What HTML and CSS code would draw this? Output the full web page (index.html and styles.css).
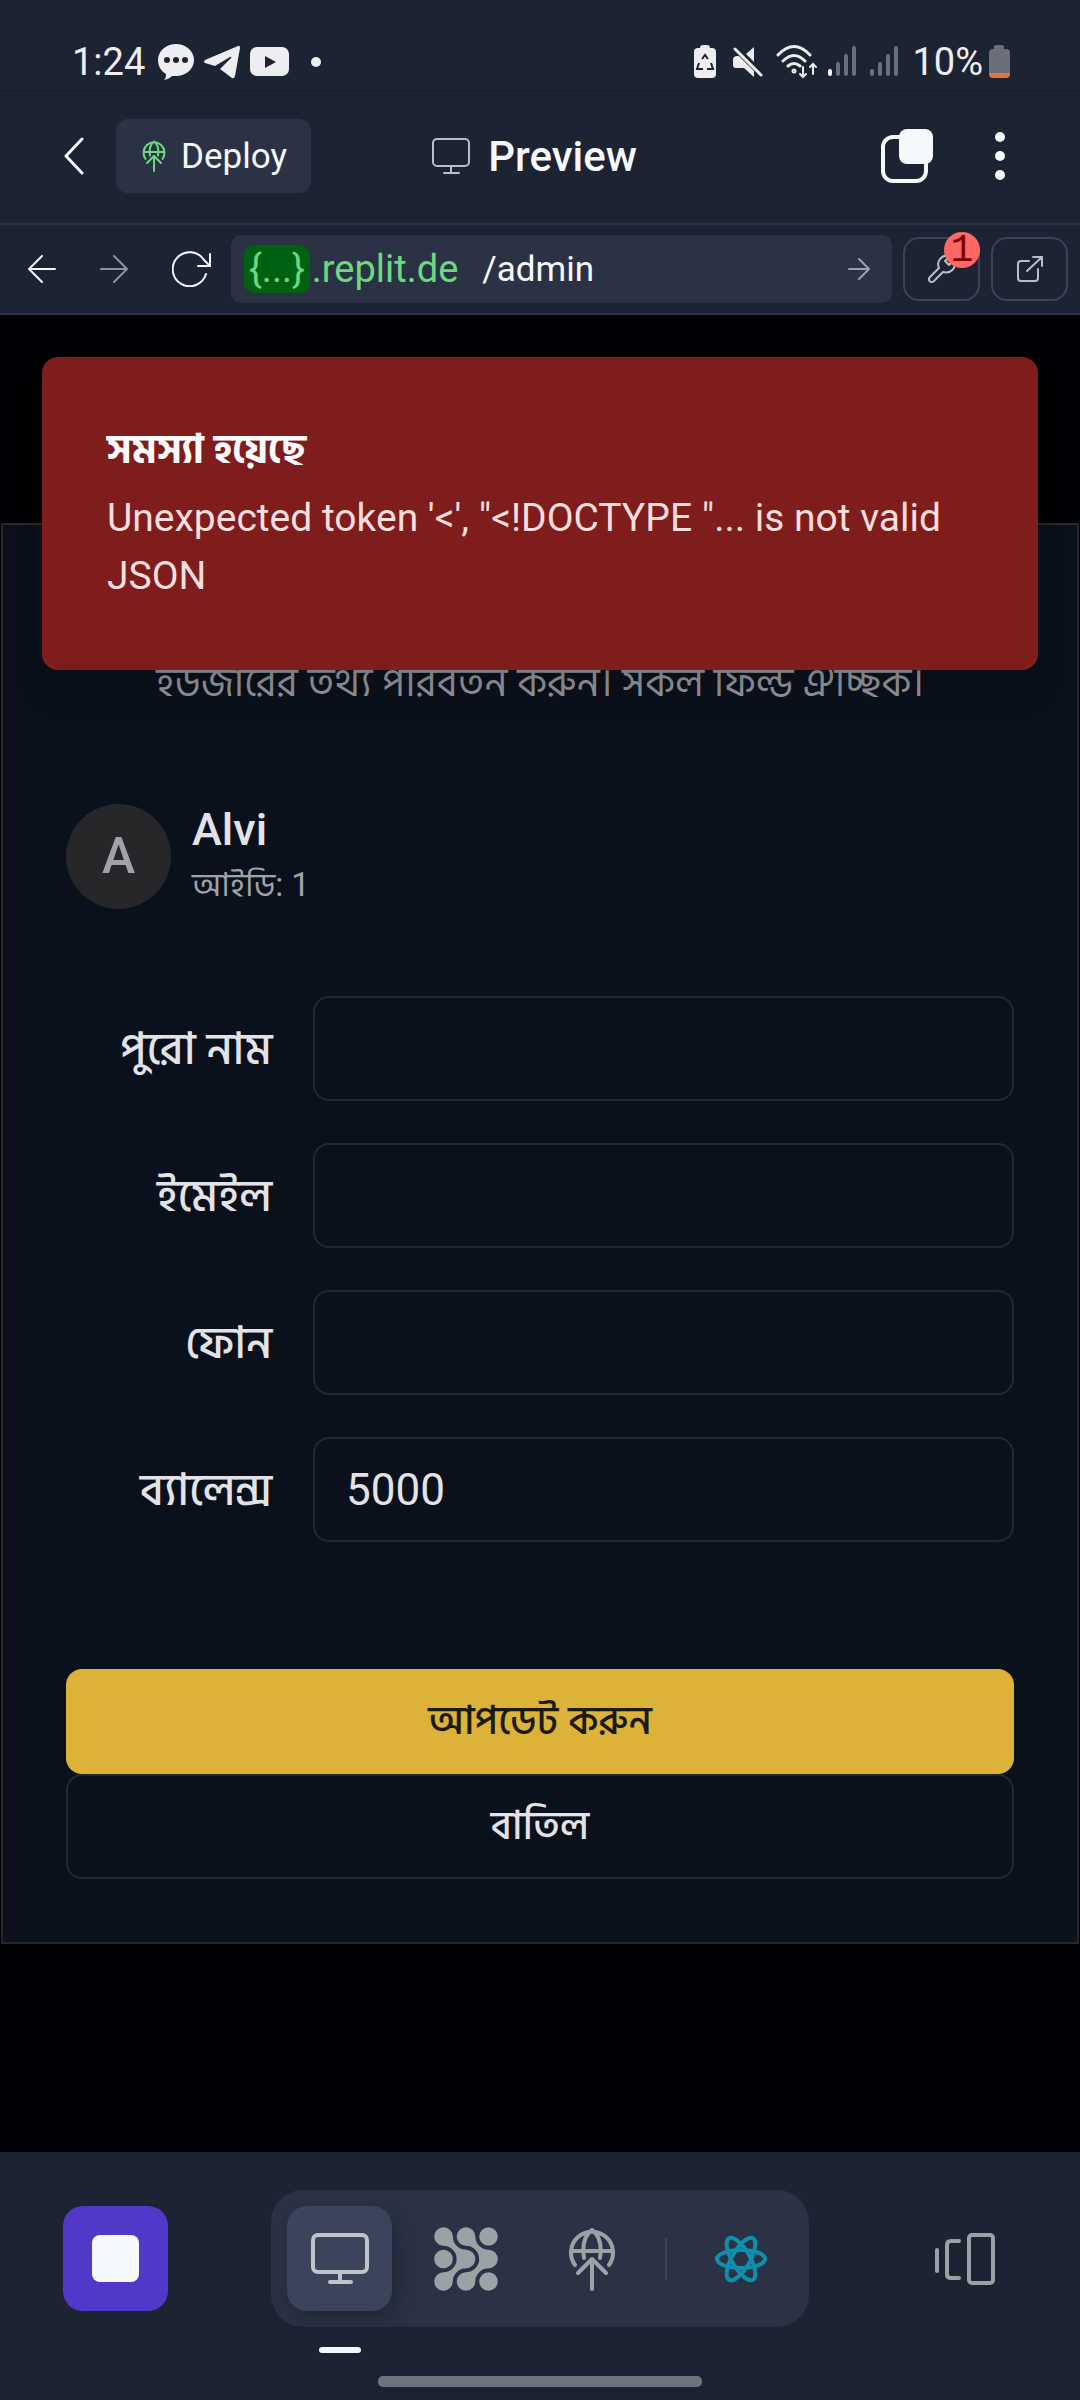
FILE: index.html
```html
<!DOCTYPE html>
<html lang="bn">
<head>
<meta charset="utf-8">
<meta name="viewport" content="width=device-width, initial-scale=1">
<title>Preview</title>
<link rel="stylesheet" href="styles.css">
</head>
<body>
<div class="screen">
  <div class="status">
    <div class="status-side">
      <span class="clock">1:24</span>
      <svg class="status-chat" width="36" height="36" viewBox="0 0 36 36" aria-hidden="true"><path fill="#eeeef1" d="M18 0C28 0 36 7 36 16S28 32 18 32h-4c-2 2-4 3-8 4 2-2 2-4 2-6C3 27 0 22 0 16 0 7 8 0 18 0z"/><g fill="#1c2333"><circle cx="9" cy="16" r="3"/><circle cx="18" cy="16" r="3"/><circle cx="27" cy="16" r="3"/></g></svg>
      <svg class="status-app" width="36" height="34" viewBox="0 0 36 34" aria-hidden="true"><path fill="#eeeef1" d="M1 15 34 1q2-1 2 2l-5 28q-1 3-3 2l-12-9 11-11q1-2-1-1L11 21 1 18q-2-1 0-3z"/></svg>
      <svg class="status-app" width="39" height="29" viewBox="0 0 39 29" aria-hidden="true"><rect width="39" height="29" rx="7" fill="#eeeef1"/><path d="m15 9 11 6-11 6z" fill="#1c2333"/></svg>
      <span class="status-dot"></span>
    </div>
    <div class="status-side">
      <svg width="22" height="34" viewBox="0 0 22 34" aria-hidden="true"><path fill="#eeeef1" d="M6 3q0-3 3-3h4q3 0 3 3h2q4 0 4 4v22q0 4-4 4H4q-4 0-4-4V7q0-4 4-4z"/><path d="M8 14l3-4 3 4M5 18l-2 6h6M17 18l2 6h-6" fill="none" stroke="#1c2333" stroke-width="2"/></svg>
      <svg class="status-mute" width="30" height="32" viewBox="0 0 30 32" aria-hidden="true"><path fill="#eeeef1" d="M13 8 21 1v15zM0 13q0-2 3-3h3l15 15v6l-10-9H3q-3 0-3-3z"/><path d="m2 3 26 26" stroke="#eeeef1" stroke-width="3" stroke-linecap="round"/></svg>
      <svg class="status-wifi" width="42" height="34" viewBox="0 0 42 34" fill="none" stroke="#eeeef1" stroke-width="3" stroke-linecap="round" aria-hidden="true"><path d="M2 10q16-17 32 0M7 16q11-11 22 0M12 21q6-5 12 0"/><circle cx="18" cy="26" r="1"/><path d="M27 22v10m-3-3 3 3 3-3M37 29V19m-3 3 3-3 3 3" stroke-width="2"/></svg>
      <svg class="status-signal" width="28" height="31" viewBox="0 0 28 31" stroke="#6b6f7b" stroke-width="4" stroke-linecap="round" aria-hidden="true"><path d="M2 25v3" stroke="#ffffff"/><path d="M10 18v10M18 10v18M26 2v26"/></svg>
      <svg class="status-signal" width="28" height="31" viewBox="0 0 28 31" stroke="#6b6f7b" stroke-width="4" stroke-linecap="round" aria-hidden="true"><path d="M2 25v3M10 18v10M18 10v18M26 2v26"/></svg>
      <span class="charge">10%</span>
      <svg width="21" height="34" viewBox="0 0 21 34" aria-hidden="true"><path fill="#6b6f7b" d="M5 4V2q0-2 2-2h6q2 0 2 2v2h2q4 0 4 4v20H0V8q0-4 4-4z"/><path fill="#ea6f41" d="M0 28h21v1q0 4-4 4H4q-4 0-4-4z"/></svg>
    </div>
  </div>

  <header class="appbar">
    <div class="appbar-left">
      <button class="icon-btn back" aria-label="Back"><svg width="20" height="38" viewBox="0 0 20 38"><path d="M18 2 2 19l16 17" fill="none" stroke="#f5f9fc" stroke-width="3" stroke-linecap="round" stroke-linejoin="round"/></svg></button>
      <button class="deploy"><svg width="24" height="32" viewBox="0 0 48 64" fill="none" stroke="#6cd97e" stroke-width="4" stroke-linecap="round" stroke-linejoin="round" aria-hidden="true"><path d="M7 38a21 21 0 1 1 34 0M3 24h42M16 31C14 18 17 8 24 3c7 5 10 15 8 28M24 62V32M10 46l14-14 14 14"/></svg>Deploy</button>
    </div>
    <h1 class="title"><svg width="38" height="37" viewBox="0 0 38 37" fill="none" stroke="#b9bfc5" stroke-width="2" stroke-linecap="round" aria-hidden="true"><rect x="1" y="1" width="36" height="27" rx="4"/><path d="M19 28v7M12 35h15"/></svg>Preview</h1>
    <div class="appbar-right">
      <button class="icon-btn" aria-label="Tabs"><svg width="52" height="54" viewBox="0 0 52 54"><rect x="2" y="8" width="43" height="44" rx="10" fill="none" stroke="#f5f9fc" stroke-width="4"/><rect x="18" y="0" width="34" height="35" rx="8" fill="#f5f9fc"/></svg></button>
      <button class="icon-btn" aria-label="More"><svg width="10" height="48" viewBox="0 0 10 48" fill="#f5f9fc"><circle cx="5" cy="5" r="5"/><circle cx="5" cy="24" r="5"/><circle cx="5" cy="43" r="5"/></svg></button>
    </div>
  </header>

  <nav class="urlbar" aria-label="Browser">
    <div class="nav-btns">
      <button class="icon-btn" aria-label="Go back"><svg width="28" height="30" viewBox="0 0 28 30" fill="none" stroke="#f5f9fc" stroke-width="2" stroke-linecap="round" stroke-linejoin="round"><path d="M27 15H1M14 2 1 15l13 13"/></svg></button>
      <button class="icon-btn" aria-label="Go forward"><svg width="28" height="30" viewBox="0 0 28 30" fill="none" stroke="#8f939b" stroke-width="2" stroke-linecap="round" stroke-linejoin="round"><path d="M1 15h26M14 2l13 13-13 13"/></svg></button>
      <button class="icon-btn" aria-label="Reload"><svg width="39" height="36" viewBox="0 0 39 36" fill="none" stroke="#f5f9fc" stroke-width="2" stroke-linecap="round" stroke-linejoin="round"><path d="M34 23A17 17 0 1 1 32 9l6 6M38 3v12H26"/></svg></button>
    </div>
    <div class="address">
      <span class="host"><span class="chip">{...}</span>.replit.de</span>
      <input class="path" type="text" value="/admin" aria-label="Path">
      <button class="icon-btn" aria-label="Go"><svg width="22" height="22" viewBox="0 0 22 22" fill="none" stroke="#9ca1a8" stroke-width="2" stroke-linecap="round" stroke-linejoin="round"><path d="M1 11h20M11 1l10 10-10 10"/></svg></button>
    </div>
    <button class="tool" aria-label="Developer tools"><svg width="28" height="30" viewBox="0 0 28 30" fill="none" stroke="#b9bfc5" stroke-width="2" stroke-linejoin="round"><path d="M22 2C14 0 8 7 11 14L2 23c-3 3 1 7 4 4l9-9c8 2 14-4 11-12l-5 5-4-4z"/></svg><span class="badge">1</span></button>
    <button class="tool" aria-label="Open in new tab"><svg width="26" height="28" viewBox="0 0 26 28" fill="none" stroke="#b9bfc5" stroke-width="2" stroke-linecap="round" stroke-linejoin="round"><path d="M12 6H4q-3 0-3 3v14q0 3 3 3h14q3 0 3-3v-9M10 16 25 2M16 2h9v9"/></svg></button>
  </nav>

  <main class="viewport">
    <div class="toast" role="alert">
      <strong class="toast-title">সমস্যা হয়েছে</strong>
      <p class="toast-text">Unexpected token '&lt;', "&lt;!DOCTYPE "... is not valid JSON</p>
    </div>
    <section class="dialog">
      <p class="desc">ইউজারের তথ্য পরিবর্তন করুন। সকল ফিল্ড ঐচ্ছিক।</p>
      <div class="user">
        <span class="avatar">A</span>
        <div>
          <h2 class="user-name">Alvi</h2>
          <p class="user-id">আইডি: 1</p>
        </div>
      </div>
      <form class="form">
        <div class="row"><label for="name">পুরো নাম</label><input id="name" type="text"></div>
        <div class="row"><label for="email">ইমেইল</label><input id="email" type="email"></div>
        <div class="row"><label for="phone">ফোন</label><input id="phone" type="tel"></div>
        <div class="row"><label for="balance">ব্যালেন্স</label><input id="balance" type="text" value="5000"></div>
        <div class="actions">
          <button class="btn btn-primary" type="submit">আপডেট করুন</button>
          <button class="btn btn-outline" type="button">বাতিল</button>
        </div>
      </form>
    </section>
  </main>

  <footer class="dock">
    <div class="dock-row">
      <button class="dock-btn stop" aria-label="Stop"><span class="stop-mark"></span></button>
      <div class="pill">
        <button class="dock-btn active" aria-label="Preview"><svg width="58" height="54" viewBox="0 0 58 54" fill="none" stroke="#bfc4ca" stroke-width="4" stroke-linecap="round"><rect x="2" y="3" width="54" height="37" rx="5"/><path d="M29 40v9M19 50h21"/></svg></button>
        <button class="dock-btn" aria-label="Agent"><svg width="64" height="64" viewBox="0 0 64 64" fill="#9ca1a6"><circle cx="9.5" cy="9.5" r="9.3"/><circle cx="32" cy="9.5" r="9.3"/><circle cx="54.500" cy="9.5" r="9.3"/><circle cx="9.5" cy="32" r="9.3"/><circle cx="32" cy="32" r="9.3"/><circle cx="54.500" cy="32" r="9.3"/><circle cx="9.5" cy="54.500" r="9.3"/><circle cx="32" cy="54.500" r="9.3"/><circle cx="54.500" cy="54.500" r="9.3"/><path d="M9.500 18.800A13.200 13.200 0 0 1 9.500 45.200V54.500H18.800A13.200 13.200 0 0 1 32 41.300V22.700A13.200 13.200 0 0 1 18.800 9.500H9.500zM32 18.800A13.200 13.200 0 0 1 32 45.200V54.500H41.300A13.200 13.200 0 0 1 54.500 41.300V22.700A13.200 13.200 0 0 1 41.300 9.500H32z"/></svg></button>
        <button class="dock-btn" aria-label="Deployments"><svg width="48" height="64" viewBox="0 0 48 64" fill="none" stroke="#9ca1a6" stroke-width="4" stroke-linecap="round" stroke-linejoin="round"><path d="M7 38a21 21 0 1 1 34 0M3 24h42M16 31C14 18 17 8 24 3c7 5 10 15 8 28M24 62V32M10 46l14-14 14 14"/></svg></button>
        <span class="divider"></span>
        <button class="dock-btn" aria-label="React"><svg width="54" height="54" viewBox="-27 -27 54 54" fill="none" stroke="#0e8fac" stroke-width="4"><ellipse rx="24" ry="9"/><ellipse rx="24" ry="9" transform="rotate(60)"/><ellipse rx="24" ry="9" transform="rotate(120)"/></svg></button>
      </div>
      <button class="dock-btn" aria-label="Panels"><svg width="60" height="54" viewBox="0 0 60 54" fill="none" stroke="#9ca1a6" stroke-width="4" stroke-linecap="round"><path d="M2 18v21M24 9h-8q-4 0-4 4v29q0 4 4 4h8"/><rect x="34" y="3" width="24" height="48" rx="3"/></svg></button>
    </div>
    <div class="gesture"></div>
  </footer>
</div>
</body>
</html>
```
FILE: styles.css
```css
* { box-sizing: border-box; }

body {
  margin: 0;
  background: #1c2333;
  color: #e3e3e6;
  font-family: Roboto, "Hind Siliguri", "Noto Sans Bengali", "Noto Sans", sans-serif;
}

h1, h2, p { margin: 0; }

button, input {
  font: inherit;
  color: inherit;
}

button {
  padding: 0;
  border: 0;
  background: none;
}

svg { display: block; flex: none; }

.screen {
  min-height: 100vh;
  display: flex;
  flex-direction: column;
}

/* Status bar */
.status {
  height: 90px;
  padding: 33px 70px 0 72px;
  display: flex;
  justify-content: space-between;
  color: #eeeef1;
  font-size: 38px;
  line-height: 60px;
}
.status-side { display: flex; align-items: center; }
.clock { margin-right: 13px; }
.status-app { margin-left: 10px; }
.status-dot {
  width: 10px;
  height: 10px;
  margin-left: 22px;
  border-radius: 50%;
  background: #eeeef1;
}
.status-mute { margin-left: 17px; }
.status-wifi { margin: 0 10px 0 13px; }
.status-signal { margin-right: 14px; }
.charge { margin-right: 6px; }

/* App bar */
.appbar {
  display: grid;
  grid-template-columns: 1fr auto 1fr;
  align-items: center;
  height: 135px;
  padding: 0 75px 2px 64px;
  border-top: 1px solid #171d2a;
  border-bottom: 2px solid #2b3245;
}
.appbar-left { display: flex; align-items: center; gap: 32px; }
.appbar-right { display: flex; align-items: center; justify-content: flex-end; gap: 62px; }
.icon-btn { display: grid; place-items: center; }
.deploy {
  display: flex;
  align-items: center;
  gap: 15px;
  height: 74px;
  padding: 0 24px 0 26px;
  border-radius: 12px;
  background: #2b3245;
  color: #f5f9fc;
  font-size: 35px;
}
.title {
  display: flex;
  align-items: center;
  gap: 18px;
  color: #f5f9fc;
  font-size: 42px;
  font-weight: 500;
}

/* Address bar */
.urlbar {
  display: flex;
  align-items: center;
  gap: 11px;
  height: 90px;
  padding: 0 12px 0 28px;
  border-bottom: 2px solid #2b3245;
}
.nav-btns { display: flex; gap: 44px; margin-right: 9px; }
.address {
  flex: 1;
  display: flex;
  align-items: center;
  min-width: 0;
  height: 68px;
  padding: 0 22px 0 13px;
  border-radius: 10px;
  background: #2b3245;
}
.host {
  color: #6cd97e;
  font-size: 38px;
  line-height: 48px;
}
.chip {
  display: inline-block;
  padding: 0 5px;
  margin-right: 2px;
  border-radius: 10px;
  background: #006112;
}
.path {
  flex: 1;
  min-width: 0;
  margin-left: 24px;
  padding: 0;
  border: 0;
  background: none;
  color: #f5f9fc;
  font-size: 35px;
}
.tool {
  position: relative;
  display: grid;
  place-items: center;
  width: 77px;
  height: 64px;
  border: 2px solid #3c445c;
  border-radius: 16px;
}
.badge {
  position: absolute;
  top: -7px;
  right: -2px;
  width: 36px;
  height: 36px;
  border-radius: 50%;
  background: #ff6666;
  color: #7a0000;
  font-family: "Liberation Mono", monospace;
  font-size: 38px;
  line-height: 38px;
}

/* Previewed page */
.viewport {
  position: relative;
  flex: 1;
  padding: 208px 1px;
  background: #000104;
}
.toast {
  position: absolute;
  z-index: 1;
  top: 42px;
  left: 42px;
  right: 42px;
  padding: 62px 63px 63px;
  border: 2px solid #7f1d1d;
  border-radius: 16px;
  background: #7f1d1d;
  box-shadow: 0 26px 40px -8px rgba(0, 0, 0, .2);
}
.toast-title {
  display: block;
  color: #fafafa;
  font-size: 40px;
  line-height: 58px;
  margin-bottom: 10px;
}
.toast-text {
  color: #f9dede;
  font-size: 39px;
  line-height: 58px;
}
.dialog {
  padding: 130px 63px 63px;
  border: 2px solid #27272a;
  background: #0b111c;
}
.desc {
  color: #96969e;
  font-size: 40px;
  line-height: 56px;
  text-align: center;
}
.user {
  display: flex;
  align-items: center;
  gap: 21px;
  margin: 90px 0 85px;
}
.avatar {
  display: grid;
  place-items: center;
  width: 105px;
  height: 105px;
  border-radius: 50%;
  background: #27272a;
  color: #a1a1aa;
  font-size: 50px;
  font-weight: 500;
}
.user-name {
  font-size: 45px;
  font-weight: 500;
  line-height: 58px;
}
.user-id {
  color: #a1a1aa;
  font-size: 33px;
  line-height: 52px;
}
.form { display: grid; gap: 42px; }
.row {
  display: grid;
  grid-template-columns: 206px 1fr;
  align-items: center;
  gap: 41px;
}
.row label {
  font-size: 45px;
  line-height: 60px;
  font-weight: 500;
  text-align: right;
}
.row input {
  width: 100%;
  height: 105px;
  padding: 0 31px;
  border: 2px solid #27272a;
  border-radius: 16px;
  background: none;
  font-size: 44px;
}
.actions { display: grid; margin-top: 85px; }
.btn {
  height: 105px;
  border-radius: 16px;
  font-size: 40px;
  font-weight: 500;
}
.btn-primary { background: #dcb238; color: #1b1a10; }
.btn-outline { border: 2px solid #27272a; }

/* Bottom dock */
.dock {
  height: 249px;
  padding: 38px 63px 14px;
  display: flex;
  flex-direction: column;
  justify-content: space-between;
}
.dock-row {
  display: flex;
  align-items: center;
  justify-content: space-between;
}
.dock-btn {
  position: relative;
  display: grid;
  place-items: center;
  width: 105px;
  height: 105px;
  border-radius: 20px;
}
.stop { background: #5138c8; }
.stop-mark {
  width: 47px;
  height: 47px;
  border-radius: 8px;
  background: #f5f9fc;
}
.pill {
  display: flex;
  align-items: center;
  gap: 21px;
  padding: 16px;
  border-radius: 32px;
  background: #2b3245;
}
.active {
  background: #3c445c;
  box-shadow: 4px 10px 20px rgba(20, 24, 40, .4);
}
.active::after {
  content: "";
  position: absolute;
  bottom: -42px;
  left: 50%;
  width: 42px;
  height: 6px;
  margin-left: -21px;
  border-radius: 3px;
  background: #f5f9ff;
}
.divider {
  width: 2px;
  height: 42px;
  background: #3c445c;
}
.gesture {
  align-self: center;
  width: 30vw;
  height: 11px;
  border-radius: 5px;
  background: #6e727d;
}
```
